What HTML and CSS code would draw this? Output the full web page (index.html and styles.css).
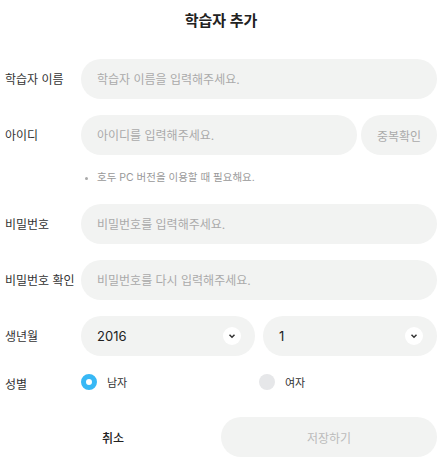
FILE: index.html
```html
<!DOCTYPE html>
<html>
<head>
    <title>학습자 추가</title>
    <link rel="stylesheet" href="styles.css">
</head>
<body>
    <div class="modal">
        <h1 class="title">학습자 추가</h1>

        <form class="form">
            <div class="row">
                <label class="row-label" for="name">학습자 이름</label>
                <div class="row-body">
                    <input class="field" type="text" id="name" placeholder="학습자 이름을 입력해주세요.">
                </div>
            </div>

            <div class="row">
                <label class="row-label" for="user_id">아이디</label>
                <div class="row-body">
                    <div class="field-group">
                        <input class="field" type="text" id="user_id" placeholder="아이디를 입력해주세요.">
                        <button type="button" class="btn-check">중복확인</button>
                    </div>
                    <p class="helper"><span class="dot"></span>호두 PC 버전을 이용할 때 필요해요.</p>
                </div>
            </div>

            <div class="row">
                <label class="row-label" for="password">비밀번호</label>
                <div class="row-body">
                    <input class="field" type="password" id="password" placeholder="비밀번호를 입력해주세요.">
                </div>
            </div>

            <div class="row">
                <label class="row-label" for="password2">비밀번호 확인</label>
                <div class="row-body">
                    <input class="field" type="password" id="password2" placeholder="비밀번호를 다시 입력해주세요.">
                </div>
            </div>

            <div class="row">
                <label class="row-label">생년월</label>
                <div class="row-body">
                    <div class="select-group">
                        <div class="select">
                            <span>2016</span>
                            <span class="arrow">
                                <svg width="8" height="6" viewBox="0 0 8 6"><path d="M1.5 1.8 L4 4.2 L6.5 1.8" fill="none" stroke="#333" stroke-width="1.5"/></svg>
                            </span>
                        </div>
                        <div class="select">
                            <span>1</span>
                            <span class="arrow">
                                <svg width="8" height="6" viewBox="0 0 8 6"><path d="M1.5 1.8 L4 4.2 L6.5 1.8" fill="none" stroke="#333" stroke-width="1.5"/></svg>
                            </span>
                        </div>
                    </div>
                </div>
            </div>

            <div class="row row-gender">
                <label class="row-label">성별</label>
                <div class="row-body">
                    <div class="radio-group">
                        <label class="radio"><span class="radio-mark checked"></span>남자</label>
                        <label class="radio"><span class="radio-mark"></span>여자</label>
                    </div>
                </div>
            </div>
        </form>

        <div class="actions">
            <button type="button" class="btn-cancel">취소</button>
            <button type="button" class="btn-save" disabled>저장하기</button>
        </div>
    </div>
</body>
</html>
```

FILE: styles.css
```css
body {
    margin: 0;
    background: #fff;
    font-family: "Inter", "Noto Sans CJK KR", sans-serif;
    color: #333;
}

.modal {
    padding: 10px 10px 0 5px;
}

.title {
    margin: 0 0 27px;
    text-align: center;
    font-size: 15px;
    line-height: 22px;
    font-weight: 700;
    color: #222;
}

.row {
    display: flex;
    margin-bottom: 16px;
}

.row-label {
    width: 76px;
    height: 38px;
    flex-shrink: 0;
    display: flex;
    align-items: center;
    font-size: 12px;
    color: #333;
}

.row-body {
    flex: 1;
}

.field {
    box-sizing: border-box;
    width: 100%;
    height: 40px;
    padding: 0 16px;
    border: none;
    border-radius: 20px;
    background: #f2f3f2;
    font-family: inherit;
    font-size: 12px;
    color: #333;
    outline: none;
}

.field::placeholder {
    color: #aaa;
}

.field-group {
    display: flex;
    gap: 4px;
}

.field-group .field {
    flex: 1;
}

.btn-check {
    width: 76px;
    height: 40px;
    border: none;
    border-radius: 20px;
    background: #f2f3f2;
    font-family: inherit;
    font-size: 12px;
    color: #aaa;
}

.helper {
    display: flex;
    align-items: center;
    margin: 16px 0 3px;
    padding-left: 4px;
    font-size: 10.5px;
    line-height: 14px;
    color: #999;
}

.dot {
    width: 3px;
    height: 3px;
    margin-right: 9px;
    border-radius: 50%;
    background: #aaa;
}

.select-group {
    display: flex;
    gap: 8px;
}

.select {
    flex: 1;
    height: 40px;
    display: flex;
    align-items: center;
    justify-content: space-between;
    padding: 0 14px 0 16px;
    border-radius: 20px;
    background: #f2f3f2;
    font-size: 13px;
    color: #222;
}

.arrow {
    width: 18px;
    height: 18px;
    border-radius: 50%;
    background: #fff;
    display: flex;
    align-items: center;
    justify-content: center;
}

.row-gender {
    margin: 15px 0 0;
}

.row-gender .row-label {
    height: 17px;
    padding-top: 3px;
}

.radio-group {
    display: flex;
    height: 20px;
    align-items: center;
}

.radio {
    flex: 1;
    display: flex;
    align-items: center;
    gap: 10px;
    font-size: 11px;
    color: #333;
}

.radio-mark {
    box-sizing: border-box;
    width: 16px;
    height: 16px;
    border-radius: 50%;
    background: #e6e7e9;
}

.radio-mark.checked {
    background: #fff;
    border: 5px solid #38b8f5;
}

.actions {
    display: flex;
    margin-top: 25px;
}

.actions button {
    flex: 1;
    height: 40px;
    border: none;
    border-radius: 20px;
    font-family: inherit;
    font-size: 12px;
}

.btn-cancel {
    background: transparent;
    color: #222;
    font-weight: 500;
}

.btn-save {
    background: #f2f3f2;
    color: #bbb;
}
```
